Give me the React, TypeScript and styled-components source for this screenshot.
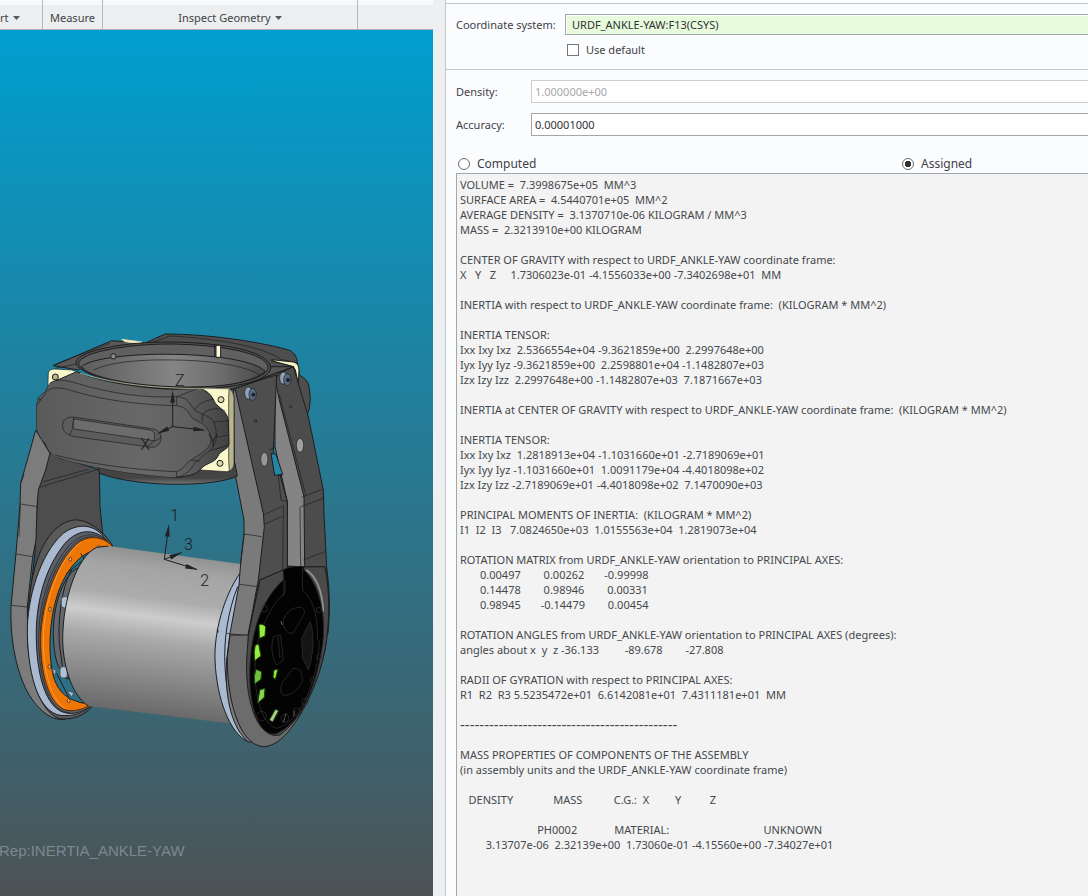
import React from "react";
import styled, { createGlobalStyle } from "styled-components";

const GlobalStyle = createGlobalStyle`
  *, *::before, *::after { box-sizing: border-box; }
  html, body { margin: 0; padding: 0; }
  body {
    font-family: "Noto Sans", "Open Sans", sans-serif;
    font-size: 11px;
    color: #3f4247;
    background: #eeeff1;
    overflow-x: hidden;
  }
`;

const Shell = styled.div`
  display: grid;
  grid-template-columns: minmax(0, 433fr) 12px minmax(0, 643fr);
  min-height: 100vh;
`;

const Workspace = styled.div`
  display: flex;
  flex-direction: column;
  min-width: 0;
`;

const Ribbon = styled.nav`
  display: flex;
  height: 30px;
  overflow: hidden;
  background: linear-gradient(#f8f9fb 0 5px, #edeeef 5px);
  border-bottom: 1px solid #a9adb4;
`;

const RibbonGroup = styled.div<{ $width: number; $align?: string }>`
  display: flex;
  flex: 0 0 ${(p) => p.$width}px;
  justify-content: ${(p) => p.$align ?? "center"};
  border-right: 1px solid #b7b9bd;
`;

const RibbonButton = styled.button`
  display: flex;
  align-items: center;
  gap: 4px;
  padding: 6px 0 0;
  border: 0;
  background: none;
  font: inherit;
  color: #3f4247;
  white-space: nowrap;
`;

const CaretIcon = styled.svg`
  width: 7px;
  height: 4px;
  fill: #55585d;
`;

const Viewport = styled.main`
  position: relative;
  flex: 1;
  overflow: hidden;
  background: linear-gradient(#009fd0, #267b95 48%, #3f616c 84%, #4d5254);
`;

const ModelDrawing = styled.svg`
  display: block;
  width: 433px;
  height: 760px;
`;

const RepLabel = styled.div`
  position: absolute;
  left: -1px;
  bottom: 36px;
  font: 15px/18px "Liberation Sans", sans-serif;
  color: #7c898f;
`;

const Panel = styled.aside`
  display: flex;
  flex-direction: column;
  min-width: 0;
  padding-top: 3px;
  background: #fbfcfe;
  border-left: 1px solid #c3c6ca;
`;

const Section = styled.section<{ $fill?: boolean }>`
  display: flex;
  flex-direction: column;
  flex: ${(p) => (p.$fill ? "1" : "none")};
  padding: 10px 0 0 10px;
  border-top: 1px solid #c3c6ca;
`;

const FieldRow = styled.div<{ $label: number; $gap: number }>`
  display: grid;
  grid-template-columns: ${(p) => p.$label}px minmax(0, 1fr);
  align-items: center;
  margin-bottom: ${(p) => p.$gap}px;
`;

const FieldLabel = styled.label`
  font-size: 11px;
  white-space: nowrap;
`;

const TextField = styled.input<{ $tone?: "reference" }>`
  width: 100%;
  height: ${(p) => (p.$tone ? 21 : 23)}px;
  padding: 0 ${(p) => (p.$tone ? 6 : 3)}px;
  border: 1px solid #a3a6ab;
  border-right: 0;
  border-radius: 0;
  outline: 0;
  font: inherit;
  color: #2f3236;
  background: ${(p) => (p.$tone ? "#e8fbdc" : "#fff")};
  box-shadow: ${(p) => (p.$tone ? "inset 1px 1px #fff" : "none")};
  &:disabled {
    color: #a6a8ab;
    border-color: #cbcdd0;
    background: #fff;
  }
`;

const CheckRow = styled.label`
  display: flex;
  align-items: center;
  gap: 7px;
  margin: 0 0 11px 111px;
  line-height: 16px;
`;

const CheckBox = styled.input`
  appearance: none;
  width: 12px;
  height: 12px;
  margin: 0;
  border: 1px solid #74777c;
  background: #fff;
`;

const ModeRow = styled.div`
  display: grid;
  grid-template-columns: 444px 1fr;
  padding: 10px 0 0 2px;
`;

const Mode = styled.label`
  display: flex;
  align-items: center;
  gap: 7px;
  font-size: 12px;
  line-height: 16px;
`;

const Radio = styled.input`
  appearance: none;
  width: 12px;
  height: 12px;
  margin: 0;
  border: 1px solid #6a6d72;
  border-radius: 50%;
  background: #fff;
  &:checked {
    background: radial-gradient(circle, #333 0 3px, #fff 3px);
  }
`;

const Report = styled.pre`
  flex: 1;
  margin: 1px 0 0;
  padding: 3px;
  overflow: hidden;
  border: 1px solid #a3a6ab;
  border-right: 0;
  border-bottom: 0;
  background: #f3f3f3;
  font: inherit;
  line-height: 15px;
  color: #45484c;
`;

const DashRule = styled.span`
  display: block;
  height: 15px;
  font-size: 15px;
`;

const massText = `VOLUME =  7.3998675e+05  MM^3
SURFACE AREA =  4.5440701e+05  MM^2
AVERAGE DENSITY =  3.1370710e-06 KILOGRAM / MM^3
MASS =  2.3213910e+00 KILOGRAM

CENTER OF GRAVITY with respect to URDF_ANKLE-YAW coordinate frame:
X   Y   Z     1.7306023e-01 -4.1556033e+00 -7.3402698e+01  MM

INERTIA with respect to URDF_ANKLE-YAW coordinate frame:  (KILOGRAM * MM^2)

INERTIA TENSOR:
Ixx Ixy Ixz  2.5366554e+04 -9.3621859e+00  2.2997648e+00
Iyx Iyy Iyz -9.3621859e+00  2.2598801e+04 -1.1482807e+03
Izx Izy Izz  2.2997648e+00 -1.1482807e+03  7.1871667e+03

INERTIA at CENTER OF GRAVITY with respect to URDF_ANKLE-YAW coordinate frame:  (KILOGRAM * MM^2)

INERTIA TENSOR:
Ixx Ixy Ixz  1.2818913e+04 -1.1031660e+01 -2.7189069e+01
Iyx Iyy Iyz -1.1031660e+01  1.0091179e+04 -4.4018098e+02
Izx Izy Izz -2.7189069e+01 -4.4018098e+02  7.1470090e+03

PRINCIPAL MOMENTS OF INERTIA:  (KILOGRAM * MM^2)
I1  I2  I3   7.0824650e+03  1.0155563e+04  1.2819073e+04

ROTATION MATRIX from URDF_ANKLE-YAW orientation to PRINCIPAL AXES:
       0.00497        0.00262       -0.99998
       0.14478        0.98946        0.00331
       0.98945       -0.14479        0.00454

ROTATION ANGLES from URDF_ANKLE-YAW orientation to PRINCIPAL AXES (degrees):
angles about x  y  z -36.133         -89.678        -27.808

RADII OF GYRATION with respect to PRINCIPAL AXES:
R1  R2  R3 5.5235472e+01  6.6142081e+01  7.4311181e+01  MM

`;

const componentText = `
MASS PROPERTIES OF COMPONENTS OF THE ASSEMBLY
(in assembly units and the URDF_ANKLE-YAW coordinate frame)

   DENSITY              MASS           C.G.:  X         Y          Z

                           PH0002             MATERIAL:                                 UNKNOWN
         3.13707e-06  2.32139e+00  1.73060e-01 -4.15560e+00 -7.34027e+01`;

const Caret = () => (
  <CaretIcon viewBox="0 0 7 4" aria-hidden="true">
    <path d="M0 0h7L3.5 4z" />
  </CaretIcon>
);

const arrow = (x: number, y: number, angle: number) => (
  <path
    d="M0 0L-38 -7V7Z"
    transform={`translate(${x} ${y}) rotate(${angle})`}
    fill="#222"
    stroke="none"
  />
);

const AnkleModel = () => (
  <ModelDrawing viewBox="0 0 433 760" role="img" aria-label="Ankle yaw assembly">
    <defs>
      <linearGradient id="barrel" gradientUnits="userSpaceOnUse" x1="500" y1="690" x2="438" y2="1185">
        <stop offset="0" stopColor="#8d8d8d" />
        <stop offset=".12" stopColor="#a4a4a4" />
        <stop offset=".3" stopColor="#acacac" />
        <stop offset=".41" stopColor="#cdcdcd" />
        <stop offset=".55" stopColor="#a9a9a9" />
        <stop offset=".8" stopColor="#858585" />
        <stop offset="1" stopColor="#686868" />
      </linearGradient>
      <linearGradient id="bore">
        <stop offset="0" stopColor="#5c5c5c" />
        <stop offset=".5" stopColor="#858585" />
        <stop offset=".75" stopColor="#6d6d6d" />
        <stop offset="1" stopColor="#474747" />
      </linearGradient>
      <linearGradient id="shell">
        <stop offset="0" stopColor="#5a5a5a" />
        <stop offset=".6" stopColor="#686868" />
        <stop offset="1" stopColor="#5c5c5c" />
      </linearGradient>
      <linearGradient id="shellSide" gradientUnits="userSpaceOnUse" x1="530" y1="0" x2="690" y2="0">
        <stop offset="0" stopColor="#626262" />
        <stop offset=".5" stopColor="#525252" />
        <stop offset="1" stopColor="#404040" />
      </linearGradient>
      <linearGradient id="lip" x1="0" y1="0" x2="0" y2="1">
        <stop offset=".7" stopColor="#444" />
        <stop offset="1" stopColor="#777" />
      </linearGradient>
    </defs>
    <g transform="translate(0 290) scale(.33333)" stroke="#1d1d1f" strokeWidth="3" fill="none" strokeLinejoin="round">
      {/* rear housing */}
      <path d="M430 72L495 42C640 42 800 70 872 92Q890 105 892 125L898 165Q926 180 928 205L931 238Q930 270 919 292L900 300L800 160L600 80Z" fill="#4e4e4e" />
      <path d="M455 68L510 48C650 55 790 80 842 118M842 118L890 128" strokeWidth="2" />
      <path d="M160 137L335 62L430 70L300 105L235 150Z" fill="#585858" />
      <path d="M160 137L185 125L330 70M165 145L240 130" strokeWidth="2" />
      <path d="M365 58L426 66L418 71L375 65Z" fill="#fffbd2" stroke="#d8d4aa" />
      <path d="M815 119L880 126Q897 130 897 150L895 192L886 150L880 140L825 125Z" fill="#f7f3c8" />

      {/* left arm */}
      <path d="M120 345L150 400L298 450L300 560L308 640L335 678L230 700L85 870L105 700L112 520Z" fill="#4d4d4d" />
      <path d="M118 502L295 448M130 485L265 448" strokeWidth="2" />
      <path d="M107 330L150 400L137 450L115 510L111 560L108 660L98 712L82 860L83 960C90 1080 130 1180 195 1198C150 1205 100 1160 70 1090C45 1030 30 950 33 860L48 700L60 555L62 490L85 410Z" fill="#7c7c7c" />
      <path d="M62 552L112 560M48 702L98 710M34 856L82 861M62 490L72 465M61 555L57 650" strokeWidth="2" />

      {/* left bearing stack */}
      <path d="M338 678C300 615 240 590 208 603C150 620 100 700 88 840C70 990 100 1170 178 1196C215 1200 250 1190 276 1160Z" fill="#5a5a5a" />
      <path d="M310 650C280 610 230 610 190 640C120 700 80 840 82 940C85 1080 120 1175 180 1186C220 1190 250 1178 265 1164L300 900Z" fill="#a8b9d0" />
      <path d="M320 662C285 625 235 625 195 670C130 750 106 860 109 960C112 1085 145 1175 205 1180C235 1182 255 1170 270 1160L300 900Z" fill="#5b6069" />
      <path d="M325 668C285 630 240 640 205 680C145 750 115 860 116 960C118 1085 150 1178 210 1178M330 674C285 637 245 645 210 685C150 755 121 860 121 960C122 1085 160 1174 214 1172" strokeWidth="2" />
      <path d="M336 678C310 650 270 645 240 665C180 705 123 840 122 960C122 1080 155 1175 215 1172C240 1171 258 1163 270 1154L310 900Z" fill="#ee7606" stroke="#5a2b00" />
      <path d="M245 665C180 710 131 840 130 960C130 1060 155 1140 195 1165" stroke="#ffb14a" strokeWidth="2" />
      <path d="M304 688C250 690 200 740 172 825C145 910 145 1010 160 1068C175 1120 205 1140 252 1150L320 900Z" fill="#2d7086" />
      <path d="M242 700L270 745M200 760L250 720M170 1060L205 1130M180 1070L220 1080" />
      <path d="M240 742C190 755 157 860 160 950C163 1020 175 1055 205 1072L250 900Z" fill="#65676a" />
      <path d="M215 750C190 790 173 880 178 970L190 1060" />
      {[[296, 682], [211, 718], [150, 868], [148, 1040], [206, 1142]].map(([x, y]) => (
        <ellipse key={`${x}-${y}`} cx={x} cy={y} rx="4" ry="6" fill="#ffb056" strokeWidth="2" />
      ))}
      <g fill="#b2c2d6" stroke="#4b5563">
        <rect x="184" y="830" width="24" height="34" rx="9" />
        <rect x="180" y="1040" width="22" height="34" rx="9" />
        <path d="M158 1045L168 1052L166 1064L160 1060ZM200 1112L222 1118L215 1130Z" />
        <ellipse cx="280" cy="697" rx="8" ry="7" />
      </g>

      {/* barrel */}
      <path d="M325 678L722 732L722 1214L265 1158C220 1130 190 1050 188 960C188 840 230 710 290 682Z" fill="url(#barrel)" stroke="none" />
      <path d="M325 678L290 682C230 710 188 840 188 960C190 1050 220 1130 265 1158" />

      {/* right spacer ring */}
      <path d="M720 760C670 830 642 940 645 1020C650 1140 690 1240 745 1266L800 1000Z" fill="#a9bad1" />
      <path d="M713 800C685 870 670 960 675 1040C680 1140 705 1220 745 1262" />
      <path d="M652 928L654 938" strokeWidth="4" />

      {/* outer right arm */}
      <path d="M822 180L838 160L880 140L925 290L970 510L972 580L980 740C990 820 990 870 984 940L900 760L862 735L862 545L835 470Z" fill="#4c4c4c" />
      <path d="M825 175L838 240L912 530L914 741L862 738L862 545L825 380Z" fill="#848484" />
      <path d="M838 225L918 528M900 560L902 740M905 532L966 508M903 560L970 535M910 720L975 695" strokeWidth="2" />
      <ellipse cx="900" cy="376" rx="11" ry="21" fill="#a0a0a0" strokeWidth="2" />

      {/* inner right arm */}
      <path d="M700 205L830 165L820 395L843 475L862 545L862 738L850 800L780 900L745 800L788 580Z" fill="#4e4e4e" />
      <path d="M813 400L828 403L848 463L824 466Z" fill="#2586a8" />
      <path d="M825 382L808 390M848 463L835 468L843 540L862 545M850 555L848 800M790 585L845 560M788 615L845 590" strokeWidth="2" />
      <path d="M700 210L706 210L790 580L793 620L775 780L745 940C730 1080 750 1220 810 1260L745 1266C700 1230 672 1140 680 1020L690 940L717 795L722 730L732 645L732 600L703 450Z" fill="#7a7a7a" />
      <path d="M732 642L785 650M718 793L775 800M680 940L740 947M722 730L732 642" strokeWidth="2" />
      <ellipse cx="793" cy="418" rx="11" ry="21" fill="#969696" strokeWidth="2" />
      <circle cx="766" cy="303" r="4" strokeWidth="2" />
      <circle cx="872" cy="260" r="3" strokeWidth="2" />

      {/* right end cap */}
      <path d="M745 945L780 780L850 750L915 741L975 740C990 820 990 900 975 990C950 1110 870 1280 790 1280C715 1275 680 1130 682 1010L690 945Z" fill="#6c6c6c" />
      <path d="M745 945L780 780L850 750L915 741L975 740C990 820 990 900 975 990C950 1110 900 1200 840 1245C780 1260 735 1160 740 1020Z" fill="#4a4a4a" />
      <path d="M919 750Q965 780 970 875" stroke="#959595" strokeWidth="5" />
      <path d="M850 750Q865 738 910 740L912 750C960 795 978 890 968 970C950 1100 900 1215 825 1242C780 1245 745 1170 750 1040C755 930 785 840 850 780Z" fill="#030303" />
      <g stroke="#333" strokeWidth="2">
        <path d="M850 762L852 820C800 870 765 960 765 1050C765 1140 790 1215 830 1225C900 1210 955 1080 958 960" />
        <path d="M855 780L855 815L848 830M907 745L908 810C940 840 955 890 952 960" />
        <path d="M850 905C855 875 880 860 905 862Q914 866 914 880L880 938C865 945 850 930 850 905Z" />
        <path d="M848 1085L880 1045Q900 1045 903 1055L908 1082C895 1110 870 1130 848 1125Q836 1110 848 1085Z" />
        <path d="M905 955L930 905C945 940 940 1010 925 1050L908 1015Z" fill="#151515" />
        <path d="M820 950L842 945L850 1020L830 1035C815 1010 812 980 820 950ZM834 950L840 1015" />
        <circle cx="785" cy="1188" r="14" />
        <circle cx="855" cy="1195" r="12" />
        <circle cx="890" cy="1175" r="11" />
        <circle cx="915" cy="1145" r="10" />
        <circle cx="792" cy="866" r="10" />
        <circle cx="957" cy="870" r="8" />
        <circle cx="958" cy="1010" r="8" />
        <circle cx="938" cy="1080" r="8" />
      </g>
      <g fill="#92f03c" stroke="#1f3d0a">
        <path d="M777 915Q785 908 797 920L795 948L778 955Z" />
        <path d="M766 975L776 972L783 1008L764 1022Q760 995 766 975Z" />
        <path d="M768 1048L785 1055L783 1078L764 1092Q760 1068 768 1048Z" fill="#6fc13a" />
        <path d="M779 1110L795 1105L793 1132L773 1150Z" fill="#84d54c" />
        <path d="M822 1050L834 1048L826 1078L819 1072Z" />
        <path d="M826 1168L836 1172L818 1206L808 1200Z" fill="#a8cf8a" />
        <path d="M843 904L847 915" stroke="#a9b955" strokeWidth="2" />
        <path d="M858 1180L850 1208M884 1172L880 1190" stroke="#777" strokeWidth="2" />
      </g>

      {/* bore ring */}
      <path d="M295 440L705 430L712 468C650 500 420 505 298 460Z" fill="url(#lip)" />
      <path d="M228 125C240 90 380 65 510 66C680 68 800 95 812 140C820 175 740 208 560 208C380 206 225 165 228 125Z" fill="#505050" />
      <path d="M236 128C248 95 385 72 510 72C670 74 795 100 804 140C808 170 720 200 560 201C380 200 232 162 236 128Z" fill="#606060" />
      <path d="M245 140C270 115 400 100 520 103C660 105 770 125 797 155C740 195 650 201 560 201C400 200 260 170 245 140Z" fill="url(#bore)" />
      <path d="M282 150C330 125 430 118 520 120C640 121 740 138 780 166" strokeWidth="2" />
      <path d="M812 140L880 140L700 208L600 208C740 200 815 175 812 140Z" fill="#555" />
      <path d="M812 122L880 140L838 160M735 196L838 155M690 207L735 196" strokeWidth="2" />
      <rect x="648" y="76" width="14" height="36" fill="#fff7d9" />
      <path d="M644 73V110" />
      <circle cx="340" cy="109" r="8" fill="#8a8a8a" />

      {/* mounting plates */}
      <path d="M143 215L145 158Q148 147 165 147L215 150L242 160L155 190Z" fill="#fbf7cd" strokeWidth="2" />
      <circle cx="166" cy="171" r="9" fill="#b9b58d" />
      <path d="M600 205L685 206Q703 210 702 235V430Q700 455 680 455L600 450Z" fill="#fbf7cd" strokeWidth="2" />
      <path d="M687 207Q700 212 702 235V430Q702 445 688 453L686 420V240Z" fill="#b9b58d" strokeWidth="2" />
      <circle cx="663" cy="239" r="9" fill="#dad6a8" />
      <circle cx="660" cy="430" r="9" fill="#dad6a8" />

      {/* front housing */}
      <path d="M230 155C300 187 430 205 520 208L600 205Q628 214 640 238C647 262 680 268 685 300L687 372C684 390 660 392 654 408C645 430 615 428 600 450Q585 468 530 472C400 465 260 440 165 410Q145 395 137 372Q112 345 110 320V255Q115 225 135 218Q140 205 150 190Z" fill="url(#shellSide)" />
      <path d="M150 190C165 175 200 180 230 190C330 220 430 235 530 230V257C555 260 562 272 570 285C582 306 606 302 620 325Q637 345 632 370C615 405 570 412 552 440Q542 452 530 455V472C400 465 260 440 165 410Q145 395 137 372Q112 345 110 320V255Q115 225 135 218Z" fill="url(#shell)" stroke="none" />
      <path d="M135 218C150 200 180 200 215 212C320 245 440 255 530 257C555 260 562 272 570 285C582 306 606 302 620 325Q637 345 632 370C615 405 570 412 552 440Q542 452 530 455C400 450 260 430 165 405" strokeWidth="2" />
      <path d="M150 190C165 175 200 180 230 190C330 220 430 235 530 230C568 232 570 256 584 270C602 286 626 282 642 306Q650 326 649 352Q646 378 630 392C610 408 588 420 574 445Q560 465 530 472M530 230V257M530 455V472" strokeWidth="2" />
      <path d="M530 230L592 206M584 270C600 245 625 240 640 238M608 282C630 262 660 262 676 274M608 282L606 306M642 306L686 302M649 352L687 345M630 392L686 376M574 420L600 424M110 255L137 220M112 235L125 240" strokeWidth="2" />
      <path d="M188 322C185 300 200 288 225 292L455 326C480 330 486 345 482 362C475 382 460 385 440 380L225 350C200 345 190 335 188 322Z" fill="#5c5c5c" strokeWidth="2" />
      <path d="M222 297L450 330Q470 335 462 362L222 327Q214 312 222 297Z" fill="#6c6c6c" strokeWidth="2" />
      <path d="M220 293C222 310 220 328 208 345M462 362Q482 360 482 348M440 380Q452 376 462 362" strokeWidth="2" />
      <path d="M240 160C360 196 470 204 600 206L690 207" stroke="#d9d6b0" strokeWidth="2" />

      {/* cap screws */}
      <g fill="#8fa3bd" strokeWidth="2">
        <ellipse cx="745" cy="219" rx="11" ry="18" />
        <ellipse cx="758" cy="223" rx="11" ry="18" fill="#59697e" />
        <circle cx="760" cy="224" r="5" fill="#222" />
        <ellipse cx="850" cy="174" rx="11" ry="18" />
        <ellipse cx="862" cy="179" rx="11" ry="18" fill="#59697e" />
        <circle cx="864" cy="180" r="5" fill="#222" />
      </g>

      {/* coordinate frames */}
      <path d="M518 320V225M518 320L480 338M518 320L610 330M493 718L505 625M493 718L545 698M493 718L590 748" />
      {arrow(518, 210, -90)}
      {arrow(470, 342, 155)}
      {arrow(618, 331, 6)}
      {arrow(507, 612, -82)}
      {arrow(546, 697, -23)}
      {arrow(594, 749, 16)}
      <g fill="#1c1c1e" stroke="none" fontFamily="Roboto, sans-serif" fontWeight="300" fontSize="48">
        <text x="525" y="199">Z</text>
        <text x="421" y="389">X</text>
        <text x="625" y="377">Y</text>
        <text x="511" y="602">1</text>
        <text x="552" y="690">3</text>
        <text x="601" y="798">2</text>
      </g>
    </g>
  </ModelDrawing>
);

export default function App() {
  return (
    <>
      <GlobalStyle />
      <Shell>
        <Workspace>
          <Ribbon>
            <RibbonGroup $width={43} $align="flex-start">
              <RibbonButton>
                rt <Caret />
              </RibbonButton>
            </RibbonGroup>
            <RibbonGroup $width={60}>
              <RibbonButton>Measure</RibbonButton>
            </RibbonGroup>
            <RibbonGroup $width={255}>
              <RibbonButton>
                Inspect Geometry <Caret />
              </RibbonButton>
            </RibbonGroup>
          </Ribbon>
          <Viewport>
            <AnkleModel />
            <RepLabel>Rep:INERTIA_ANKLE-YAW</RepLabel>
          </Viewport>
        </Workspace>
        <div />
        <Panel>
          <Section>
            <FieldRow $label={109} $gap={7}>
              <FieldLabel htmlFor="csys">Coordinate system:</FieldLabel>
              <TextField id="csys" $tone="reference" defaultValue="URDF_ANKLE-YAW:F13(CSYS)" />
            </FieldRow>
            <CheckRow>
              <CheckBox type="checkbox" /> Use default
            </CheckRow>
          </Section>
          <Section $fill>
            <FieldRow $label={75} $gap={10}>
              <FieldLabel htmlFor="density">Density:</FieldLabel>
              <TextField id="density" disabled defaultValue="1.000000e+00" />
            </FieldRow>
            <FieldRow $label={75} $gap={10}>
              <FieldLabel htmlFor="accuracy">Accuracy:</FieldLabel>
              <TextField id="accuracy" defaultValue="0.00001000" />
            </FieldRow>
            <ModeRow>
              <Mode>
                <Radio type="radio" name="mode" /> Computed
              </Mode>
              <Mode>
                <Radio type="radio" name="mode" defaultChecked /> Assigned
              </Mode>
            </ModeRow>
            <Report>
              {massText}
              <DashRule>{"-".repeat(45)}</DashRule>
              {componentText}
            </Report>
          </Section>
        </Panel>
      </Shell>
    </>
  );
}
